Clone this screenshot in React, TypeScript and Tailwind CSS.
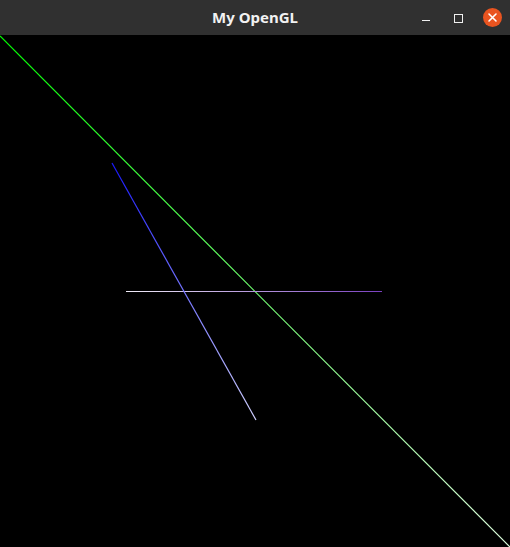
import React from "react";

export default function App() {
  return (
    <div className="w-[510px] h-[547px] flex flex-col bg-black overflow-hidden">
      <div className="h-[35px] shrink-0 bg-[#303030] relative flex items-center justify-center">
        <span
          className="text-[15px] font-bold text-[#f2f2f2] leading-none"
          style={{ fontFamily: '"Noto Sans", "Open Sans", sans-serif' }}
        >
          My OpenGL
        </span>
        <div className="absolute right-[8px] top-0 h-[35px] flex items-center gap-[18px]">
          <svg width="14" height="14" viewBox="0 0 14 14">
            <rect x="3" y="9" width="8" height="1" fill="#f0f0f0" />
          </svg>
          <svg width="14" height="14" viewBox="0 0 14 14">
            <rect x="3.5" y="3.5" width="8" height="8" fill="none" stroke="#f0f0f0" strokeWidth="1" />
          </svg>
          <svg width="19" height="19" viewBox="0 0 19 19">
            <circle cx="9.5" cy="9.5" r="9.5" fill="#e95420" />
            <path d="M6 6 L13 13 M13 6 L6 13" stroke="#ffffff" strokeWidth="1.6" strokeLinecap="round" />
          </svg>
        </div>
      </div>
      <div className="flex-1 bg-black">
        <svg width="510" height="512" viewBox="0 0 510 512">
          <defs>
            <linearGradient id="gd" gradientUnits="userSpaceOnUse" x1="0" y1="1" x2="510" y2="512">
              <stop offset="0" stopColor="#00ff00" />
              <stop offset="1" stopColor="#e0ffe0" />
            </linearGradient>
            <linearGradient id="gh" gradientUnits="userSpaceOnUse" x1="126" y1="256" x2="382" y2="256">
              <stop offset="0" stopColor="#f0ecf8" />
              <stop offset="1" stopColor="#7a40c0" />
            </linearGradient>
            <linearGradient id="gb" gradientUnits="userSpaceOnUse" x1="112" y1="128" x2="256" y2="385">
              <stop offset="0" stopColor="#1818ff" />
              <stop offset="1" stopColor="#d0d0ff" />
            </linearGradient>
          </defs>
          <path d="M0 1 L510 512" stroke="url(#gd)" strokeWidth="1.2" fill="none" />
          <rect x="126" y="256" width="256" height="1" fill="url(#gh)" />
          <path d="M112 128 L256 385" stroke="url(#gb)" strokeWidth="1.2" fill="none" />
        </svg>
      </div>
    </div>
  );
}
